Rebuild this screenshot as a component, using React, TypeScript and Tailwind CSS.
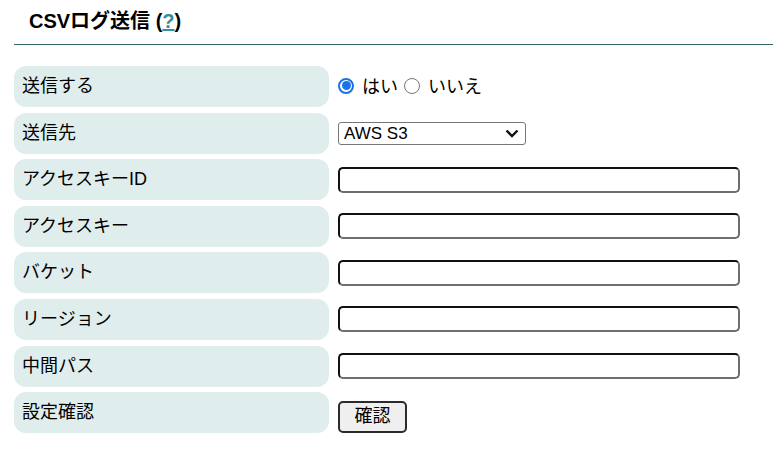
import React from "react";

const font = { fontFamily: '"Liberation Sans", "Noto Sans CJK JP", sans-serif' };

const Label: React.FC<{ children: React.ReactNode }> = ({ children }) => (
  <div className="h-[41px] w-[315px] shrink-0 rounded-[12px] bg-[#e0eded] flex items-center pl-[8px] text-[18px] text-black">
    {children}
  </div>
);

const TextInput: React.FC = () => (
  <input
    type="text"
    className="w-[402px] h-[26px] rounded-[5px] border-2 border-t-[#111] border-l-[#111] border-b-[#6e6e6e] border-r-[#6e6e6e] bg-white outline-none"
  />
);

const Row: React.FC<{ label: string; children: React.ReactNode }> = ({ label, children }) => (
  <div className="flex items-center gap-[9px]">
    <Label>{label}</Label>
    {children}
  </div>
);

export default function App() {
  return (
    <div className="w-[773px] h-[450px] bg-white" style={font}>
      <div className="pl-[14px]">
        <h2 className="h-[45px] flex items-center pl-[15px] pb-[2px] text-[20px] font-bold text-black border-b border-[#336666]">
          CSVログ送信 (<a className="text-[#2f8f9f] underline">?</a>)
        </h2>
        <div className="flex flex-col gap-[5.6px] pt-[21px]">
          <Row label="送信する">
            <div className="flex items-center text-[18px] pt-[2px]">
              <span className="w-[16px] h-[16px] shrink-0 rounded-full border-2 border-[#1a73e8] flex items-center justify-center mr-[8px] -mt-[4px]">
                <span className="w-[9px] h-[9px] rounded-full bg-[#1a73e8]" />
              </span>
              <span className="mr-[6px]">はい</span>
              <span className="w-[16px] h-[16px] shrink-0 rounded-full border border-[#767676] mr-[8px] -mt-[4px]" />
              <span>いいえ</span>
            </div>
          </Row>
          <Row label="送信先">
            <div className="w-[188px] h-[23px] border border-[#767676] rounded-[3px] flex items-center justify-between pl-[5px] pr-[6px] text-[17px] text-black mt-[1px]">
              <span>AWS S3</span>
              <svg width="14" height="9" viewBox="0 0 14 9" fill="none">
                <path d="M1.5 1.5 L7 7 L12.5 1.5" stroke="#111" strokeWidth="2.4" />
              </svg>
            </div>
          </Row>
          <Row label="アクセスキーID">
            <TextInput />
          </Row>
          <Row label="アクセスキー">
            <TextInput />
          </Row>
          <Row label="バケット">
            <TextInput />
          </Row>
          <Row label="リージョン">
            <TextInput />
          </Row>
          <Row label="中間パス">
            <TextInput />
          </Row>
          <Row label="設定確認">
            <button className="mt-[8px] w-[69px] h-[32px] rounded-[5px] border-2 border-[#2b2b2b] bg-[#efefef] text-[18px] text-black flex items-center justify-center">
              確認
            </button>
          </Row>
        </div>
      </div>
    </div>
  );
}
